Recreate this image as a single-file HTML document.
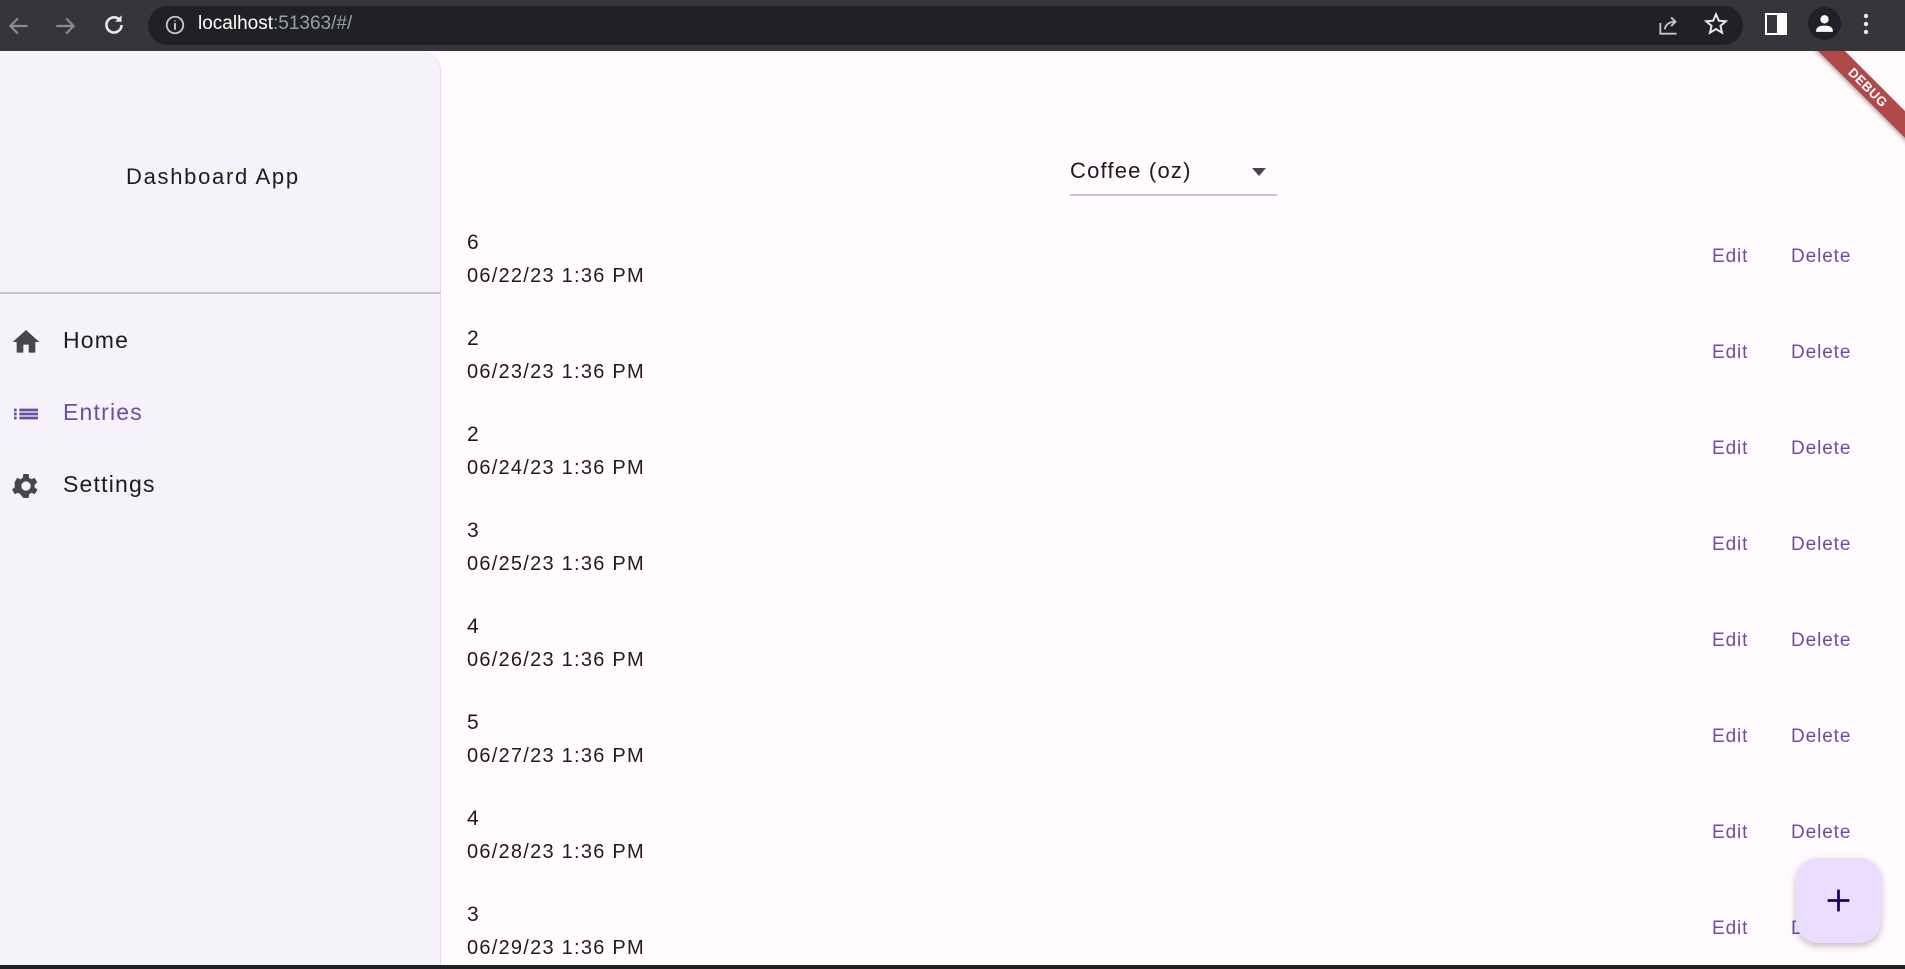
<!DOCTYPE html>
<html><head><meta charset="utf-8"><style>
*{margin:0;padding:0;box-sizing:border-box}
body{width:1905px;height:969px;overflow:hidden;background:#fffbfe;font-family:"Liberation Sans",sans-serif;position:relative;color:#1c1b1f}
.top{position:absolute;left:0;top:0;width:1905px;height:51px;background:#35363a}
.pill{position:absolute;left:148px;top:6px;width:1595px;height:39px;border-radius:20px;background:#202124}
.url{position:absolute;left:198px;top:13px;font-size:19px;color:#fff}
.url span{color:#9aa0a6}
.side{position:absolute;left:0;top:51px;width:441px;height:914px;background:#f6f2f9;border-top-right-radius:20px;border-right:1px solid #e3dfe6}
.abs{position:absolute;white-space:nowrap}
.d{font-size:20px;letter-spacing:1.25px}
.v{font-size:21px}
.btn{color:#6750a4;font-size:19px;letter-spacing:.9px}
.nav{font-size:23px;letter-spacing:1.2px}
.fab{position:absolute;left:1796px;top:858px;width:85px;height:85px;border-radius:22px;background:#eaddff;box-shadow:0 3px 8px rgba(0,0,0,.25)}
</style></head><body>
<div class="top">
<svg class="abs" style="left:6px;top:13px" width="26" height="26" viewBox="0 0 24 24"><path d="M20 12H5M11 5l-7 7 7 7" stroke="#8a8b8e" stroke-width="2" fill="none"/></svg>
<svg class="abs" style="left:52px;top:13px" width="26" height="26" viewBox="0 0 24 24"><path d="M4 12h15M13 5l7 7-7 7" stroke="#8a8b8e" stroke-width="2" fill="none"/></svg>
<svg class="abs" style="left:101px;top:12px" width="26" height="26" viewBox="0 0 24 24"><path d="M19 12a7 7 0 1 1-2-5" stroke="#e8eaed" stroke-width="2.4" fill="none"/><path d="M19 3v6h-6z" fill="#e8eaed"/></svg>
<div class="pill"></div>
<svg class="abs" style="left:164px;top:14px" width="22" height="22" viewBox="0 0 24 24"><circle cx="12" cy="12" r="9" stroke="#c4c7c5" stroke-width="2" fill="none"/><path d="M12 10v7M12 7v1" stroke="#c4c7c5" stroke-width="2.2"/></svg>
<div class="url">localhost<span>:51363/#/</span></div>
<svg class="abs" style="left:1656px;top:12px" width="26" height="26" viewBox="0 0 24 24"><path d="M4 10v10h15M8 16c1-5 5-7 10-7M14 5l4 4-4 4" stroke="#c4c7c5" stroke-width="1.7" fill="none"/></svg>
<svg class="abs" style="left:1703px;top:11px" width="26" height="26" viewBox="0 0 24 24"><path d="M12 3l2.6 6 6.4.5-4.9 4.2 1.5 6.3L12 16.6 6.4 20l1.5-6.3L3 9.5 9.4 9z" stroke="#e8eaed" stroke-width="1.8" fill="none"/></svg>
<svg class="abs" style="left:1765px;top:13px" width="22" height="22" viewBox="0 0 22 22"><rect x="1" y="1" width="20" height="20" fill="none" stroke="#fff" stroke-width="2"/><rect x="12" y="1" width="9" height="20" fill="#fff"/></svg>
<div class="abs" style="left:1808px;top:7px;width:33px;height:33px;border-radius:50%;background:#202124"></div>
<svg class="abs" style="left:1812px;top:11px" width="25" height="25" viewBox="0 0 24 24"><circle cx="12" cy="8" r="4" fill="#fff"/><path d="M4 19c0-4 4-5 8-5s8 1 8 5v1H4z" fill="#fff"/></svg>
<svg class="abs" style="left:1862px;top:12px" width="8" height="26" viewBox="0 0 8 26"><circle cx="4" cy="4" r="2.2" fill="#e8eaed"/><circle cx="4" cy="12" r="2.2" fill="#e8eaed"/><circle cx="4" cy="20" r="2.2" fill="#e8eaed"/></svg>
</div>
<div class="side">
<div class="abs" style="left:126px;top:113px;font-size:22px;letter-spacing:1.7px">Dashboard App</div>
<div class="abs" style="left:0;top:241px;width:441px;height:2px;background:#cac4d0"></div>
<svg class="abs" style="left:10px;top:275px" width="32" height="32" viewBox="0 0 24 24"><path d="M10 20v-6h4v6h5v-8h3L12 3 2 12h3v8z" fill="#49454f"/></svg>
<div class="abs nav" style="left:63px;top:276px">Home</div>
<svg class="abs" style="left:10px;top:347px" width="32" height="32" viewBox="0 0 24 24"><path d="M3 8h2v2H3zM3 11h2v2H3zM3 14h2v2H3zM7 8h14v2H7zM7 11h14v2H7zM7 14h14v2H7z" fill="#6750a4"/></svg>
<div class="abs nav" style="left:63px;top:348px;color:#6750a4">Entries</div>
<svg class="abs" style="left:10px;top:419px" width="32" height="32" viewBox="0 0 24 24"><path d="M19.4 13a7.5 7.5 0 0 0 0-2l2.1-1.6-2-3.5-2.5 1a7 7 0 0 0-1.7-1L15 3h-4l-.4 2.9a7 7 0 0 0-1.7 1l-2.5-1-2 3.5L4.6 11a7.5 7.5 0 0 0 0 2l-2.1 1.6 2 3.5 2.5-1a7 7 0 0 0 1.7 1L11 21h4l.4-2.9a7 7 0 0 0 1.7-1l2.5 1 2-3.5zM13 15.5a3.5 3.5 0 1 1 0-7 3.5 3.5 0 0 1 0 7z" fill="#49454f" transform="translate(-1 0)"/></svg>
<div class="abs nav" style="left:63px;top:420px">Settings</div>
</div>
<div class="abs" style="left:1070px;top:158px;font-size:22px;letter-spacing:1.2px">Coffee (oz)</div>
<svg class="abs" style="left:1250px;top:166px" width="18" height="12" viewBox="0 0 18 12"><path d="M2 2h14L9 10z" fill="#49454f"/></svg>
<div class="abs" style="left:1070px;top:194px;width:207px;height:2px;background:#cac4d0"></div>

<div class="abs v" style="left:467px;top:231px">6</div><div class="abs d" style="left:467px;top:265px">06/22/23 1:36 PM</div><div class="abs btn" style="left:1712px;top:246px">Edit</div><div class="abs btn" style="left:1791px;top:246px">Delete</div>
<div class="abs v" style="left:467px;top:327px">2</div><div class="abs d" style="left:467px;top:361px">06/23/23 1:36 PM</div><div class="abs btn" style="left:1712px;top:342px">Edit</div><div class="abs btn" style="left:1791px;top:342px">Delete</div>
<div class="abs v" style="left:467px;top:423px">2</div><div class="abs d" style="left:467px;top:457px">06/24/23 1:36 PM</div><div class="abs btn" style="left:1712px;top:438px">Edit</div><div class="abs btn" style="left:1791px;top:438px">Delete</div>
<div class="abs v" style="left:467px;top:519px">3</div><div class="abs d" style="left:467px;top:553px">06/25/23 1:36 PM</div><div class="abs btn" style="left:1712px;top:534px">Edit</div><div class="abs btn" style="left:1791px;top:534px">Delete</div>
<div class="abs v" style="left:467px;top:615px">4</div><div class="abs d" style="left:467px;top:649px">06/26/23 1:36 PM</div><div class="abs btn" style="left:1712px;top:630px">Edit</div><div class="abs btn" style="left:1791px;top:630px">Delete</div>
<div class="abs v" style="left:467px;top:711px">5</div><div class="abs d" style="left:467px;top:745px">06/27/23 1:36 PM</div><div class="abs btn" style="left:1712px;top:726px">Edit</div><div class="abs btn" style="left:1791px;top:726px">Delete</div>
<div class="abs v" style="left:467px;top:807px">4</div><div class="abs d" style="left:467px;top:841px">06/28/23 1:36 PM</div><div class="abs btn" style="left:1712px;top:822px">Edit</div><div class="abs btn" style="left:1791px;top:822px">Delete</div>
<div class="abs v" style="left:467px;top:903px">3</div><div class="abs d" style="left:467px;top:937px">06/29/23 1:36 PM</div><div class="abs btn" style="left:1712px;top:918px">Edit</div><div class="abs btn" style="left:1791px;top:918px">Delete</div>

<div class="fab"><svg class="abs" style="left:28px;top:28px" width="29" height="29" viewBox="0 0 24 24"><path d="M12 3v18M3 12h18" stroke="#21005d" stroke-width="2.3"/></svg></div>
<div class="abs" style="left:1765px;top:51px;width:140px;height:140px;overflow:hidden">
<div class="abs" style="left:3px;top:27px;width:200px;height:19px;background:#b04a4a;transform:rotate(45deg);color:#fff;font-size:13px;font-weight:bold;text-align:center;line-height:19px;letter-spacing:.5px;box-shadow:0 2px 4px rgba(0,0,0,.3)">DEBUG</div></div>
<div class="abs" style="left:0;top:965px;width:1905px;height:4px;background:#202124"></div>
</body></html>
